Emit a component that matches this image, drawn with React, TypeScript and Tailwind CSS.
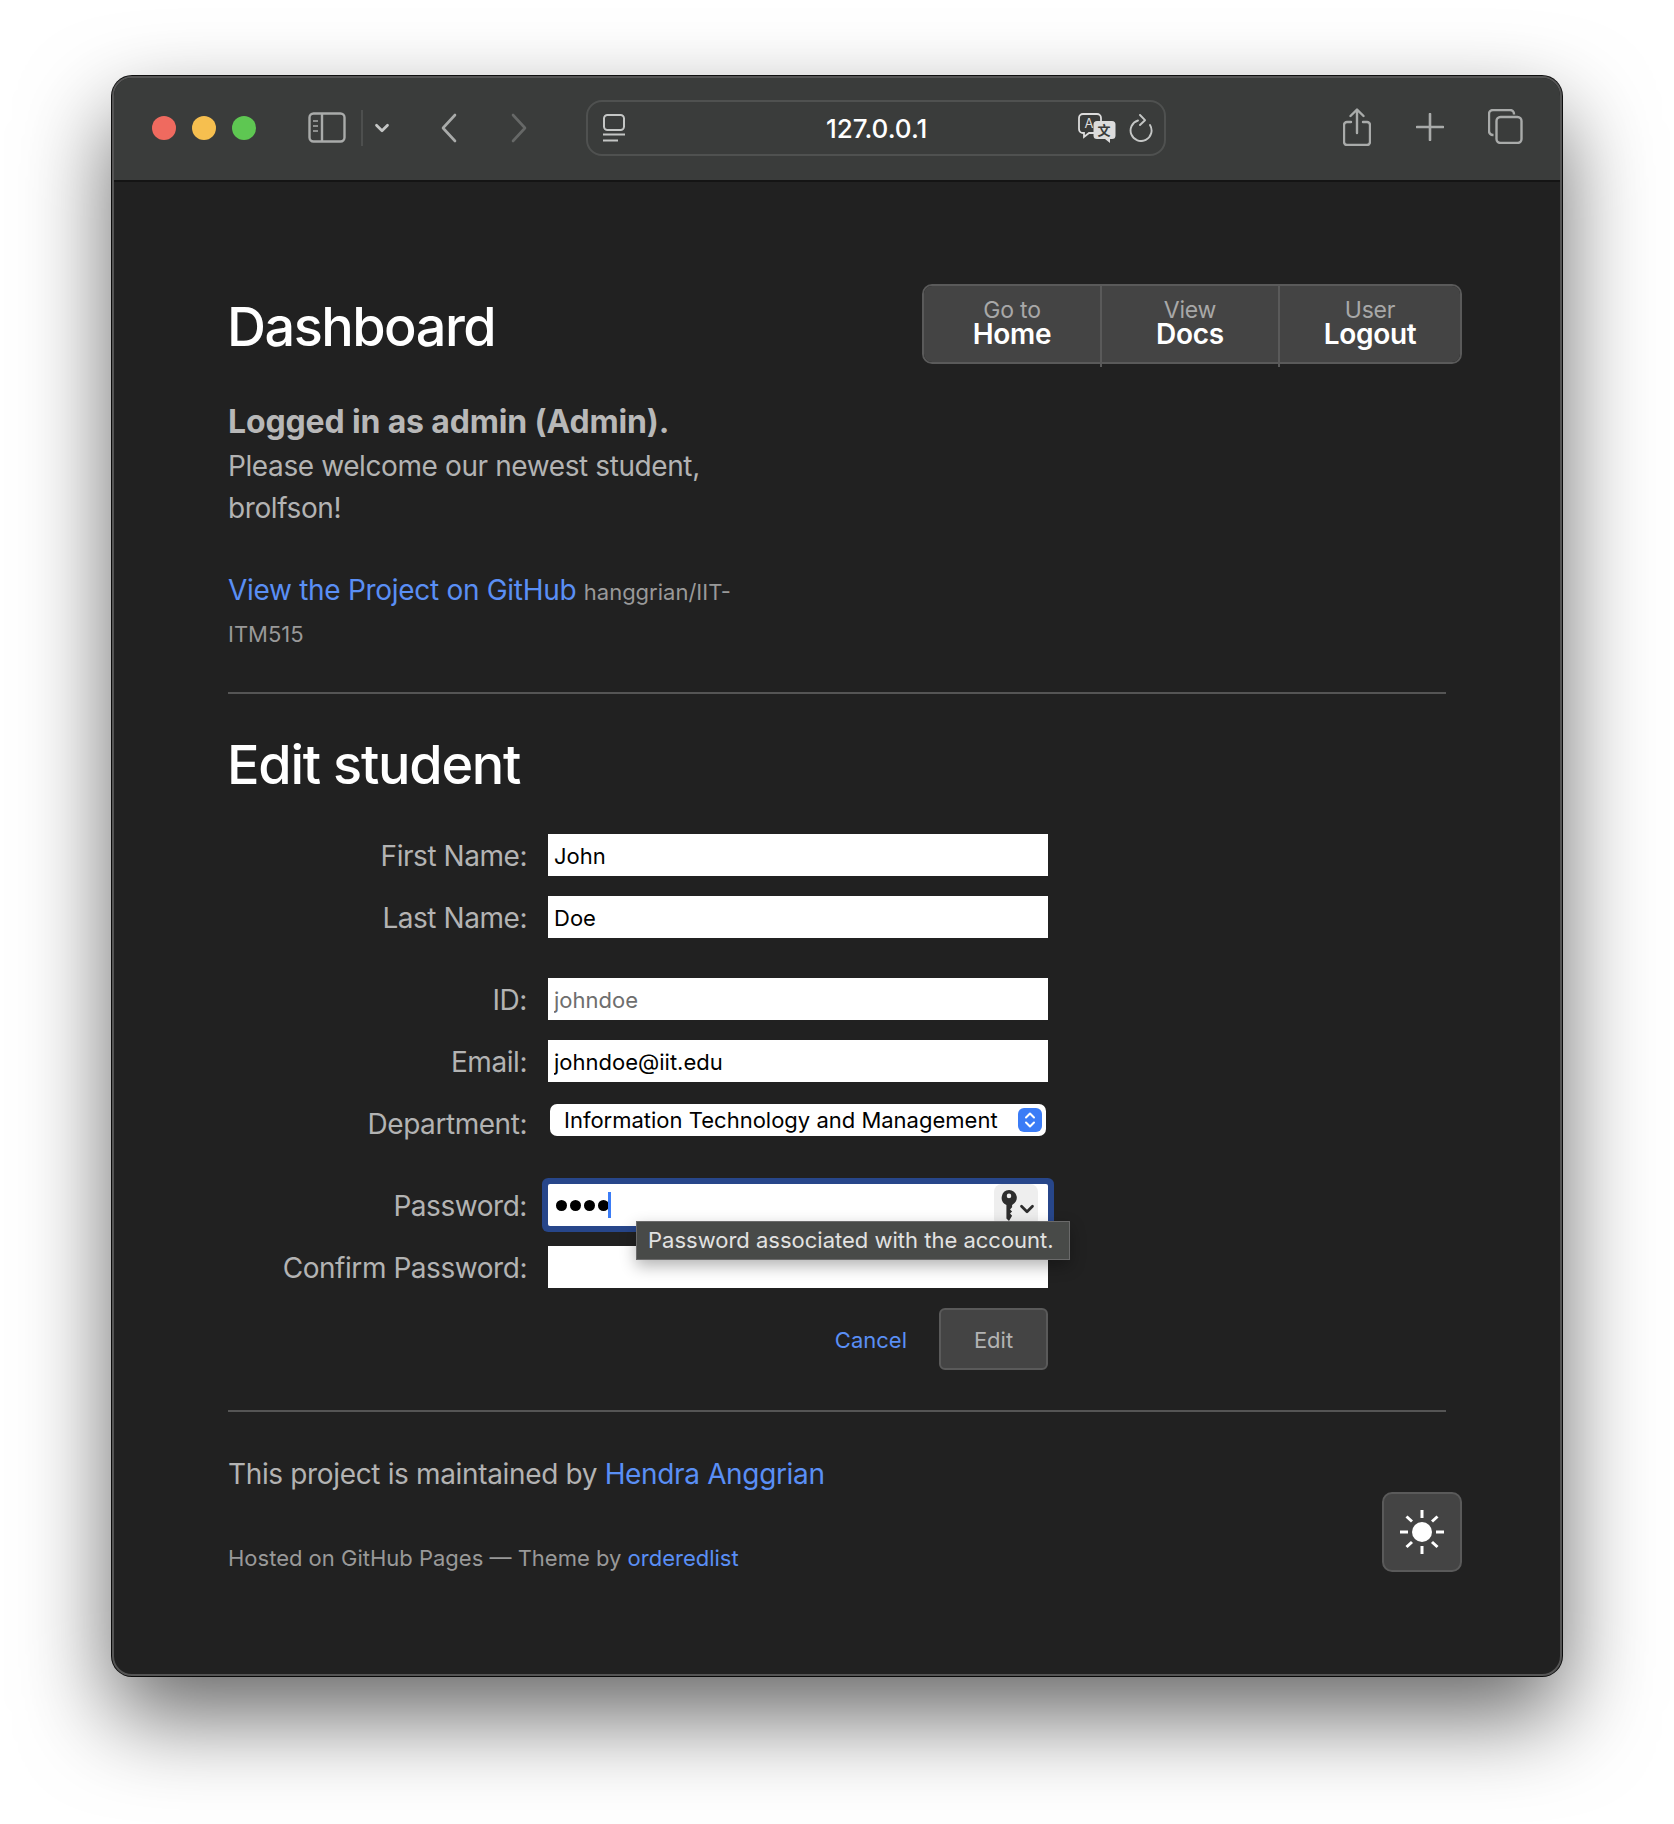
import type { ReactNode } from "react";
import { ChevronDown } from "lucide-react";

const stroke = "#a9abaa";

function SidebarIcon() {
  return (
    <svg width="38" height="31" viewBox="0 0 38 31" fill="none" stroke={stroke} strokeWidth="2.4">
      <rect x="1.500" y="1.500" width="35" height="28" rx="4" />
      <path d="M14 2v27" />
      <path d="M5 9h5M5 14h5M5 19h5" strokeWidth="2" stroke="#8d8f8e" />
    </svg>
  );
}

function NavChevron({ direction, color }: { direction: "left" | "right"; color: string }) {
  const d = direction === "left" ? "M15 2L3 15l12 13" : "M2 2l12 13L2 28";
  return (
    <svg width="17" height="30" viewBox="0 0 17 30" fill="none" stroke={color} strokeWidth="2.6" strokeLinecap="round" strokeLinejoin="round">
      <path d={d} />
    </svg>
  );
}

function TabOverviewIcon() {
  return (
    <svg width="24" height="28" viewBox="0 0 24 28" fill="none" stroke="#c4c6c5" strokeWidth="2">
      <rect x="2" y="1" width="20" height="15" rx="3.500" />
      <path d="M1 20.500h22M1 26.500h15" />
    </svg>
  );
}

function TranslateIcon() {
  return (
    <svg width="38" height="30" viewBox="0 0 38 30">
      <path
        d="M5 1h14a4 4 0 0 1 4 4v11a4 4 0 0 1-4 4h-8l-5 4v-4H5a4 4 0 0 1-4-4V5a4 4 0 0 1 4-4z"
        fill="#393b3a"
        stroke="#dcdcdc"
        strokeWidth="1.800"
      />
      <text x="11" y="15" fontSize="13" fontFamily="Inter, sans-serif" fill="#dcdcdc" textAnchor="middle">
        A
      </text>
      <path
        d="M19 8h15a3.500 3.500 0 0 1 3.500 3.500v11a3.500 3.500 0 0 1-3.500 3.500h-2v4l-5-4h-8a3.500 3.500 0 0 1-3.500-3.500v-11A3.500 3.500 0 0 1 19 8z"
        fill="#dcdcdc"
      />
      <text x="26" y="22" fontSize="13" fontWeight="700" fontFamily="'Noto Sans CJK SC', sans-serif" fill="#393b3a" textAnchor="middle">
        文
      </text>
    </svg>
  );
}

function ReloadIcon() {
  return (
    <svg width="24" height="28" viewBox="0 0 24 28" fill="none" stroke="#c4c6c5" strokeWidth="1.900" strokeLinecap="round" strokeLinejoin="round">
      <path d="M9 6.500A10.500 10.500 0 1 0 21 11" />
      <path d="M11 1l5 5.200-5 4.800" />
    </svg>
  );
}

function ShareIcon() {
  return (
    <svg width="28" height="38" viewBox="0 0 28 38" fill="none" stroke={stroke} strokeWidth="2.400" strokeLinecap="round" strokeLinejoin="round">
      <path d="M8 14H4a3 3 0 0 0-3 3v17a3 3 0 0 0 3 3h20a3 3 0 0 0 3-3V17a3 3 0 0 0-3-3h-4" />
      <path d="M14 25V2M7.500 8L14 1.500 20.500 8" />
    </svg>
  );
}

function PlusIcon() {
  return (
    <svg width="28" height="28" viewBox="0 0 28 28" fill="none" stroke={stroke} strokeWidth="2.600" strokeLinecap="round">
      <path d="M14 1v26M1 14h26" />
    </svg>
  );
}

function TabsIcon() {
  return (
    <svg width="35" height="35" viewBox="0 0 35 35" fill="none" stroke={stroke} strokeWidth="2.400">
      <path d="M5.500 26H5a4 4 0 0 1-4-4V5a4 4 0 0 1 4-4h17a4 4 0 0 1 4 4v.5" />
      <rect x="8.500" y="8" width="25" height="26" rx="4" />
    </svg>
  );
}

function KeyIcon() {
  return (
    <svg width="16" height="31" viewBox="0 0 15 30" className="shrink-0">
      <path
        fillRule="evenodd"
        d="M7.500 0a7.500 7.500 0 0 1 3 14.400v2.400l-2 2 2 2-2 2 2 2L7.500 30 5 27.500V14.400A7.500 7.500 0 0 1 7.500 0zm0 3.500a2.200 2.200 0 1 0 0 4.400 2.200 2.200 0 0 0 0-4.400z"
        fill="#2d2d2d"
      />
    </svg>
  );
}

function SunIcon() {
  return (
    <svg width="44" height="44" viewBox="0 0 44 44" fill="none" stroke="#ffffff" strokeWidth="3">
      <circle cx="22" cy="22" r="10" fill="#ffffff" stroke="none" />
      <path d="M22 0v8M22 36v8M0 22h8M36 22h8M6.500 6.500l5.500 5M32 32l5.500 5M37.500 6.500l-5.500 5M12 32l-5.500 5" />
    </svg>
  );
}

function NavButton({ top, bottom, className, divider }: { top: string; bottom: string; className: string; divider?: boolean }) {
  return (
    <a href="#" className={`relative flex flex-col items-center justify-center bg-[#444444] pb-[4px] ${className}`}>
      <span className="text-[23px] leading-[24px] tracking-[-0.2px] text-[#a8a8a8]">{top}</span>
      <span className="text-[28px] leading-[24px] font-semibold tracking-[-0.3px] text-white">{bottom}</span>
      {divider ? <span className="absolute -right-[2px] -bottom-[5px] h-[5px] w-[2px] bg-[#5a5a5a]" /> : null}
    </a>
  );
}

function Field({ label, children, className = "" }: { label: string; children: ReactNode; className?: string }) {
  return (
    <div className={`flex h-[42px] items-center gap-[21px] ${className}`}>
      <label className="w-[299px] pt-[2px] text-right text-[28px] tracking-[-0.45px] text-[#b3b3b3]">{label}</label>
      <div className="relative h-full w-[500px]">{children}</div>
    </div>
  );
}

const inputClass = "h-full w-full bg-white px-[6px] pt-[1px] text-[22px] outline-none";

export default function App() {
  return (
    <div className="min-h-[1824px] bg-white pt-[76px] pl-[112px] font-['Inter',sans-serif]">
      <div className="flex h-[1600px] w-[1450px] flex-col overflow-hidden rounded-[20px] border-2 border-[#555555] bg-[#212121] shadow-[0_40px_90px_rgba(0,0,0,0.6),0_0_0_1px_#111111]">
        <header className="flex h-[104px] shrink-0 items-center border-b-2 border-[#141414] bg-[#3a3c3b] pr-[37px] pb-[3px] pl-[38px]">
          <div className="flex gap-[16px]">
            <span className="h-[24px] w-[24px] rounded-full bg-[#ef6a5f]" />
            <span className="h-[24px] w-[24px] rounded-full bg-[#f6bf4f]" />
            <span className="h-[24px] w-[24px] rounded-full bg-[#5ec752]" />
          </div>
          <div className="ml-[52px]">
            <SidebarIcon />
          </div>
          <span className="ml-[15px] h-[36px] w-[2px] bg-[#4d4f4e]" />
          <ChevronDown className="ml-[8px] text-[#c4c6c5]" size={22} strokeWidth={3} />
          <div className="ml-[47px]">
            <NavChevron direction="left" color="#a9abaa" />
          </div>
          <div className="ml-[54px]">
            <NavChevron direction="right" color="#666867" />
          </div>
          <div className="ml-[58px] flex h-[56px] w-[580px] items-center rounded-[16px] border-2 border-[#4f5150] pr-[11px] pl-[14px]">
            <TabOverviewIcon />
            <span className="ml-[200px] w-[101px] pt-[2px] text-center text-[26px] font-medium whitespace-nowrap text-white">127.0.0.1</span>
            <div className="ml-auto flex items-center gap-[13px]">
              <TranslateIcon />
              <ReloadIcon />
            </div>
          </div>
          <div className="mb-[2px] ml-auto flex items-center">
            <ShareIcon />
            <div className="ml-[45px]">
              <PlusIcon />
            </div>
            <div className="ml-[44px]">
              <TabsIcon />
            </div>
          </div>
        </header>

        <main className="flex flex-1 flex-col pt-[102px] pr-[114px] pl-[114px]">
          <div className="flex items-start justify-between">
            <div className="w-[510px]">
              <h1 className="mt-[9px] -ml-[1px] text-[54px] leading-[68px] font-[550] tracking-[-1.5px] text-white">Dashboard</h1>
              <p className="mt-[37px] text-[32px] leading-[47px] tracking-[-0.15px] text-[#b8b8b8]">
                <strong className="font-bold">Logged in as admin (Admin).</strong>
              </p>
              <p className="w-[480px] text-[28px] leading-[42px] tracking-[-0.4px] text-[#b3b3b3]">Please welcome our newest student, brolfson!</p>
              <p className="mt-[41px] leading-[40px]">
                <a href="#" className="text-[28px] tracking-[-0.3px] text-[#5a8ff5]">
                  View the Project on GitHub
                </a>{" "}
                <small className="ml-[3px] text-[22px] text-[#999999]">hanggrian/IIT-ITM515</small>
              </p>
            </div>
            <nav className="mr-[-16px] flex h-[80px] w-[540px] rounded-[10px] border-2 border-[#5a5a5a]">
              <NavButton top="Go to" bottom="Home" divider className="w-[178px] rounded-l-[8px] border-r-2 border-[#5a5a5a]" />
              <NavButton top="View" bottom="Docs" divider className="w-[178px] border-r-2 border-[#5a5a5a]" />
              <NavButton top="User" bottom="Logout" className="flex-1 rounded-r-[8px]" />
            </nav>
          </div>

          <hr className="mt-[36px] border-t-2 border-[#555555]" />

          <h2 className="mt-[37px] -ml-[1px] text-[54px] leading-[68px] font-[550] tracking-[-1.25px] text-white">Edit student</h2>

          <form className="mt-[35px] flex flex-col gap-[20px]">
            <Field label="First Name:">
              <input readOnly className={`${inputClass} text-black`} defaultValue="John" />
            </Field>
            <Field label="Last Name:">
              <input readOnly className={`${inputClass} text-black`} defaultValue="Doe" />
            </Field>
            <Field label="ID:" className="mt-[20px]">
              <input readOnly className={`${inputClass} text-[#6e6e6e]`} defaultValue="johndoe" />
            </Field>
            <Field label="Email:">
              <input readOnly className={`${inputClass} text-black`} defaultValue="johndoe@iit.edu" />
            </Field>
            <Field label="Department:">
              <div className="mx-[2px] mt-[2px] flex h-[32px] items-center justify-between rounded-[7px] bg-white pr-[4px] pl-[14px]">
                <span className="text-[22px] text-black">Information Technology and Management</span>
                <span className="flex h-[24px] w-[24px] items-center justify-center rounded-[6px] bg-[#3b7cf6]">
                  <svg width="12" height="18" viewBox="0 0 12 18" fill="none" stroke="#ffffff" strokeWidth="2" strokeLinecap="round" strokeLinejoin="round">
                    <path d="M2 6.500l4-4 4 4M2 11.500l4 4 4-4" />
                  </svg>
                </span>
              </div>
            </Field>
            <Field label="Password:" className="mt-[20px]">
              <div className="flex h-full items-center gap-[3px] rounded-[2px] bg-white pl-[8px] shadow-[0_0_0_6px_#27468a]">
                <span className="h-[11px] w-[11px] rounded-full bg-black" />
                <span className="h-[11px] w-[11px] rounded-full bg-black" />
                <span className="h-[11px] w-[11px] rounded-full bg-black" />
                <span className="h-[11px] w-[11px] rounded-full bg-black" />
                <span className="ml-[-4px] h-[26px] w-[3px] bg-[#3b7cf6]" />
                <span className="mr-[10px] ml-auto flex h-[43px] w-[44px] items-center rounded-[8px] bg-[#eeeeee] pl-[7px]">
                  <KeyIcon />
                  <ChevronDown className="mt-[8px] -ml-[1px] shrink-0 text-[#2d2d2d]" size={22} strokeWidth={3} />
                </span>
              </div>
              <div className="absolute top-[37px] left-[88px] z-10 flex h-[39px] w-[434px] items-center border border-[#6a6a6a] bg-[#484a48] pl-[11px] text-[22px] whitespace-nowrap text-[#e2e2e2] shadow-[0_6px_16px_rgba(0,0,0,0.3)]">
                Password associated with the account.
              </div>
            </Field>
            <Field label="Confirm Password:">
              <input readOnly type="password" className={`${inputClass} text-black`} />
            </Field>
            <div className="flex h-[62px] w-[820px] items-center justify-end">
              <a href="#" className="pt-[2px] text-[22px] text-[#5a8ff5]">
                Cancel
              </a>
              <button type="button" className="ml-[32px] h-[62px] w-[109px] rounded-[6px] border-2 border-[#5a5a5a] bg-[#444444] pt-[2px] text-[22px] text-[#b3b3b3]">
                Edit
              </button>
            </div>
          </form>

          <hr className="mt-[40px] border-t-2 border-[#555555]" />

          <footer className="mr-[-16px] flex items-start justify-between">
            <div>
              <p className="mt-[41px] text-[28px] leading-[42px] tracking-[-0.35px] text-[#b3b3b3]">
                This project is maintained by{" "}
                <a href="#" className="text-[#5a8ff5]">
                  Hendra Anggrian
                </a>
              </p>
              <p className="mt-[42px] text-[22px] leading-[42px] text-[#999999]">
                Hosted on GitHub Pages — Theme by{" "}
                <a href="#" className="text-[#5a8ff5]">
                  orderedlist
                </a>
              </p>
            </div>
            <button type="button" className="mt-[80px] flex h-[80px] w-[80px] items-center justify-center rounded-[10px] border-2 border-[#5a5a5a] bg-[#444444]">
              <SunIcon />
            </button>
          </footer>
        </main>
      </div>
    </div>
  );
}
